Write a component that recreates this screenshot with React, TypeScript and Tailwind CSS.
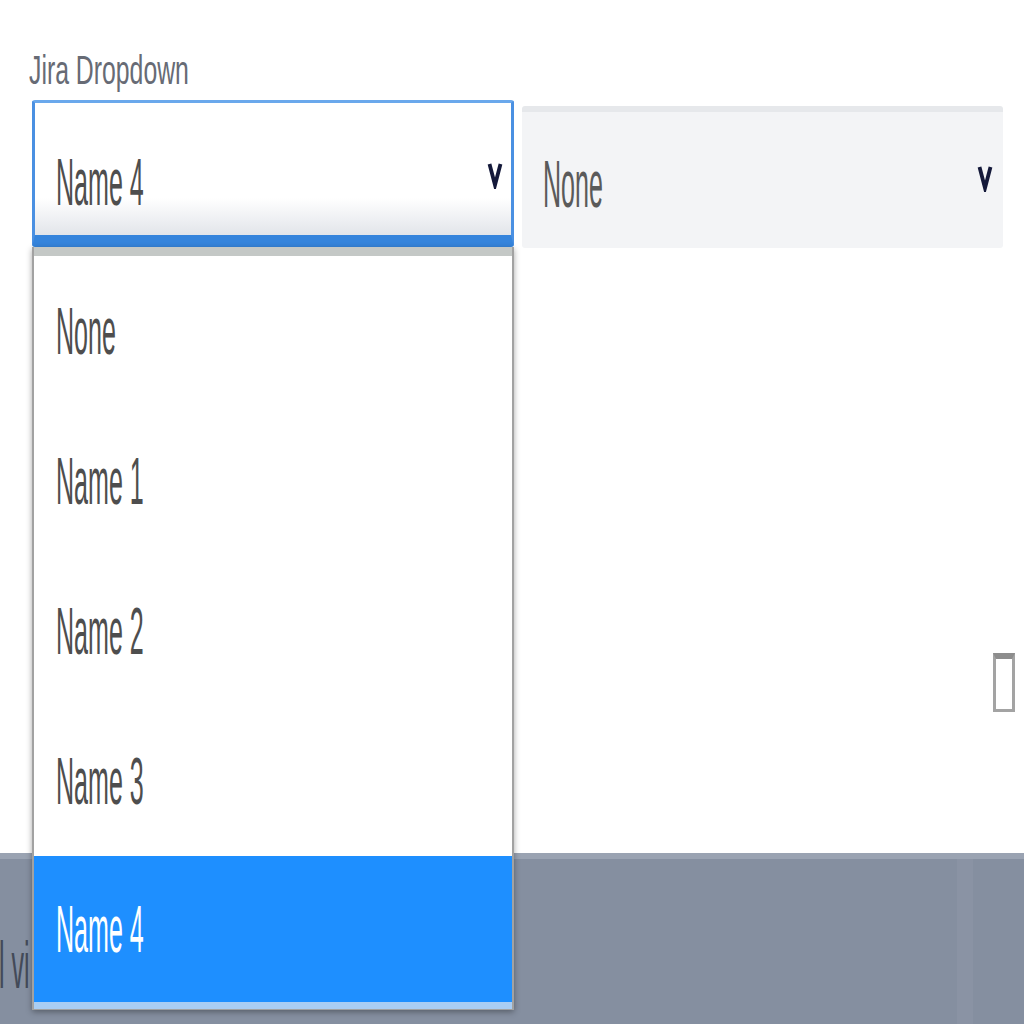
import React from "react";

const options = ["None", "Name 1", "Name 2", "Name 3", "Name 4"];

function Squish({ children, className }: { children: React.ReactNode; className?: string }) {
  return (
    <span className={"inline-block origin-left whitespace-nowrap leading-none " + (className ?? "")}>
      {children}
    </span>
  );
}

function Chevron() {
  return (
    <svg width="16" height="28" viewBox="0 0 16 28" className="shrink-0">
      <path d="M2.5 3 L8 24 L13.5 3" fill="none" stroke="#14193a" strokeWidth="3.8" strokeLinejoin="miter" />
    </svg>
  );
}

export default function App() {
  return (
    <div className="relative w-[1024px] h-[1024px] overflow-hidden bg-white font-['Liberation_Sans',Arial,sans-serif]">
      <div className="flex h-[853px] flex-col">
        <div className="pl-[29px] pt-[50px] h-[100px]">
          <Squish className="text-[40px] text-[#676b75] scale-x-[0.62]">Jira Dropdown</Squish>
        </div>

        <div className="flex items-start gap-[8px] pl-[32px]">
          <div className="flex h-[147px] w-[482px] items-center rounded-[3px] border-[3px] border-[#4a90e2] border-t-[#6aa8ec] border-b-[12px] border-b-[#3584dc] bg-linear-to-b from-white from-[72%] to-[#e2e5ea] pl-[21px] pr-[8px] pt-[25px]">
            <Squish className="flex-1 text-[66px] text-[#4e4e4e] scale-x-[0.38]">Name 4</Squish>
            <div className="-mt-[14px]">
              <Chevron />
            </div>
          </div>

          <div className="mt-[6px] flex h-[142px] w-[481px] items-center rounded-[3px] border-t-[6px] border-[#e6e8eb] bg-[#f3f4f6] pl-[21px] pr-[10px] pt-[8px]">
            <Squish className="flex-1 text-[66px] text-[#5a5a5a] scale-x-[0.38]">None</Squish>
            <div className="-mt-[12px]">
              <Chevron />
            </div>
          </div>
        </div>

        <div className="mt-[405px] flex justify-end pr-[9px]">
          <div className="h-[59px] w-[22px] border-[3px] border-t-[6px] border-[#a3a3a3] border-t-[#8d8d8d] bg-white" />
        </div>
      </div>

      <div className="flex h-[171px] border-t-[6px] border-[#9aa3b2] bg-[#858fa0]">
        <div className="flex-1 pt-[73px]">
          <Squish className="-ml-[1px] text-[66px] text-[#434a58] scale-x-[0.38]">l vi</Squish>
        </div>
        <div className="w-[16px] bg-[#8a93a4]" />
        <div className="w-[51px]" />
      </div>

      <div className="absolute left-[32px] top-[247px] flex h-[763px] w-[482px] flex-col border-x-2 border-b border-[#a2a2a2] bg-white shadow-[0_2px_6px_rgba(0,0,0,0.35)]">
        <div className="h-[9px] bg-[#c4c8c6]" />
        {options.map((o, i) => {
          const sel = i === options.length - 1;
          return (
            <div
              key={o}
              className={
                sel
                  ? "flex h-[146px] items-center bg-[#1e8fff] pl-[22px]"
                  : "flex h-[150px] items-center pl-[22px]"
              }
            >
              <Squish className={"text-[66px] scale-x-[0.38] " + (sel ? "text-white" : "text-[#4e4e4e]")}>{o}</Squish>
            </div>
          );
        })}
        <div className="h-[7px] bg-[#a9cdf3]" />
      </div>
    </div>
  );
}
